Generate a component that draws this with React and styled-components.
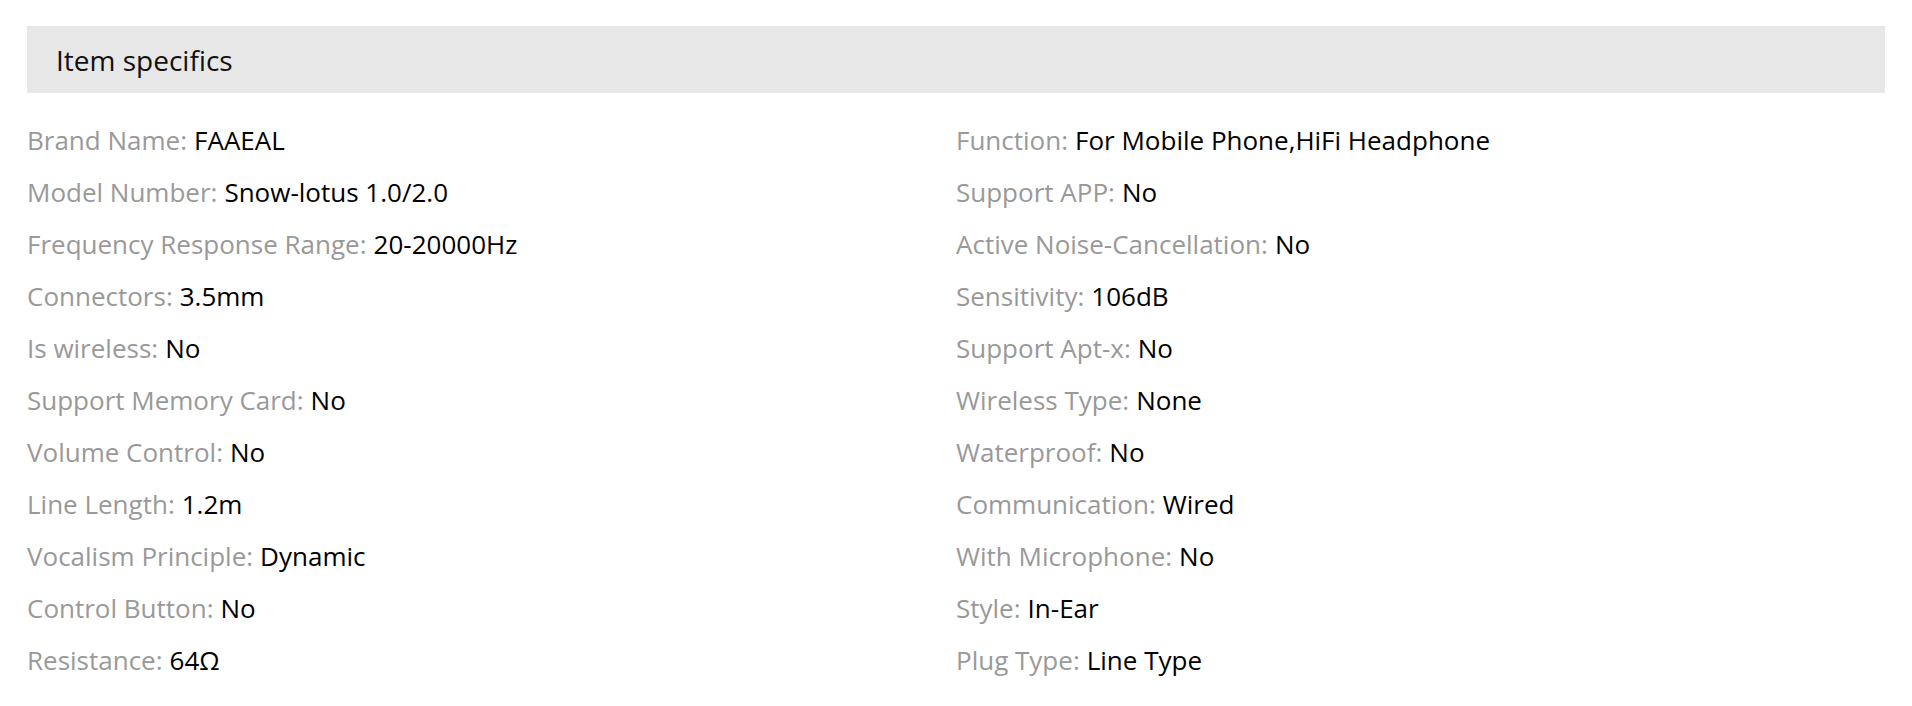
import styled, { createGlobalStyle } from "styled-components";

const GlobalStyle = createGlobalStyle`
  body {
    margin: 0;
    background: #fff;
    font-family: "Open Sans", "Liberation Sans", sans-serif;
  }
`;

const Wrapper = styled.div`
  padding: 26px 27px;
`;

const Header = styled.div`
  height: 67px;
  display: flex;
  align-items: center;
  padding-left: 29px;
  background-color: #e7e7e7;
  font-size: 28px;
  color: #111;
`;

const Specs = styled.ul`
  list-style: none;
  margin: 0;
  padding: 21px 0 0;
  display: grid;
  grid-template-columns: 1fr 1fr;
  grid-auto-flow: column;
  grid-template-rows: repeat(11, 52px);
`;

const Item = styled.li`
  display: flex;
  align-items: center;
  font-size: 26px;
  white-space: nowrap;
`;

const Label = styled.span`
  color: #999;
  margin-right: 7px;
`;

const Value = styled.span`
  color: #000;
`;

const left = [
  ["Brand Name", "FAAEAL"],
  ["Model Number", "Snow-lotus 1.0/2.0"],
  ["Frequency Response Range", "20-20000Hz"],
  ["Connectors", "3.5mm"],
  ["Is wireless", "No"],
  ["Support Memory Card", "No"],
  ["Volume Control", "No"],
  ["Line Length", "1.2m"],
  ["Vocalism Principle", "Dynamic"],
  ["Control Button", "No"],
  ["Resistance", "64Ω"],
];

const right = [
  ["Function", "For Mobile Phone,HiFi Headphone"],
  ["Support APP", "No"],
  ["Active Noise-Cancellation", "No"],
  ["Sensitivity", "106dB"],
  ["Support Apt-x", "No"],
  ["Wireless Type", "None"],
  ["Waterproof", "No"],
  ["Communication", "Wired"],
  ["With Microphone", "No"],
  ["Style", "In-Ear"],
  ["Plug Type", "Line Type"],
];

const App = () => {
  return (
    <>
      <GlobalStyle />
      <Wrapper>
        <Header>Item specifics</Header>
        <Specs>
          {[...left, ...right].map(([label, value]) => (
            <Item key={label}>
              <Label>{label}:</Label>
              <Value>{value}</Value>
            </Item>
          ))}
        </Specs>
      </Wrapper>
    </>
  );
};

export default App;
